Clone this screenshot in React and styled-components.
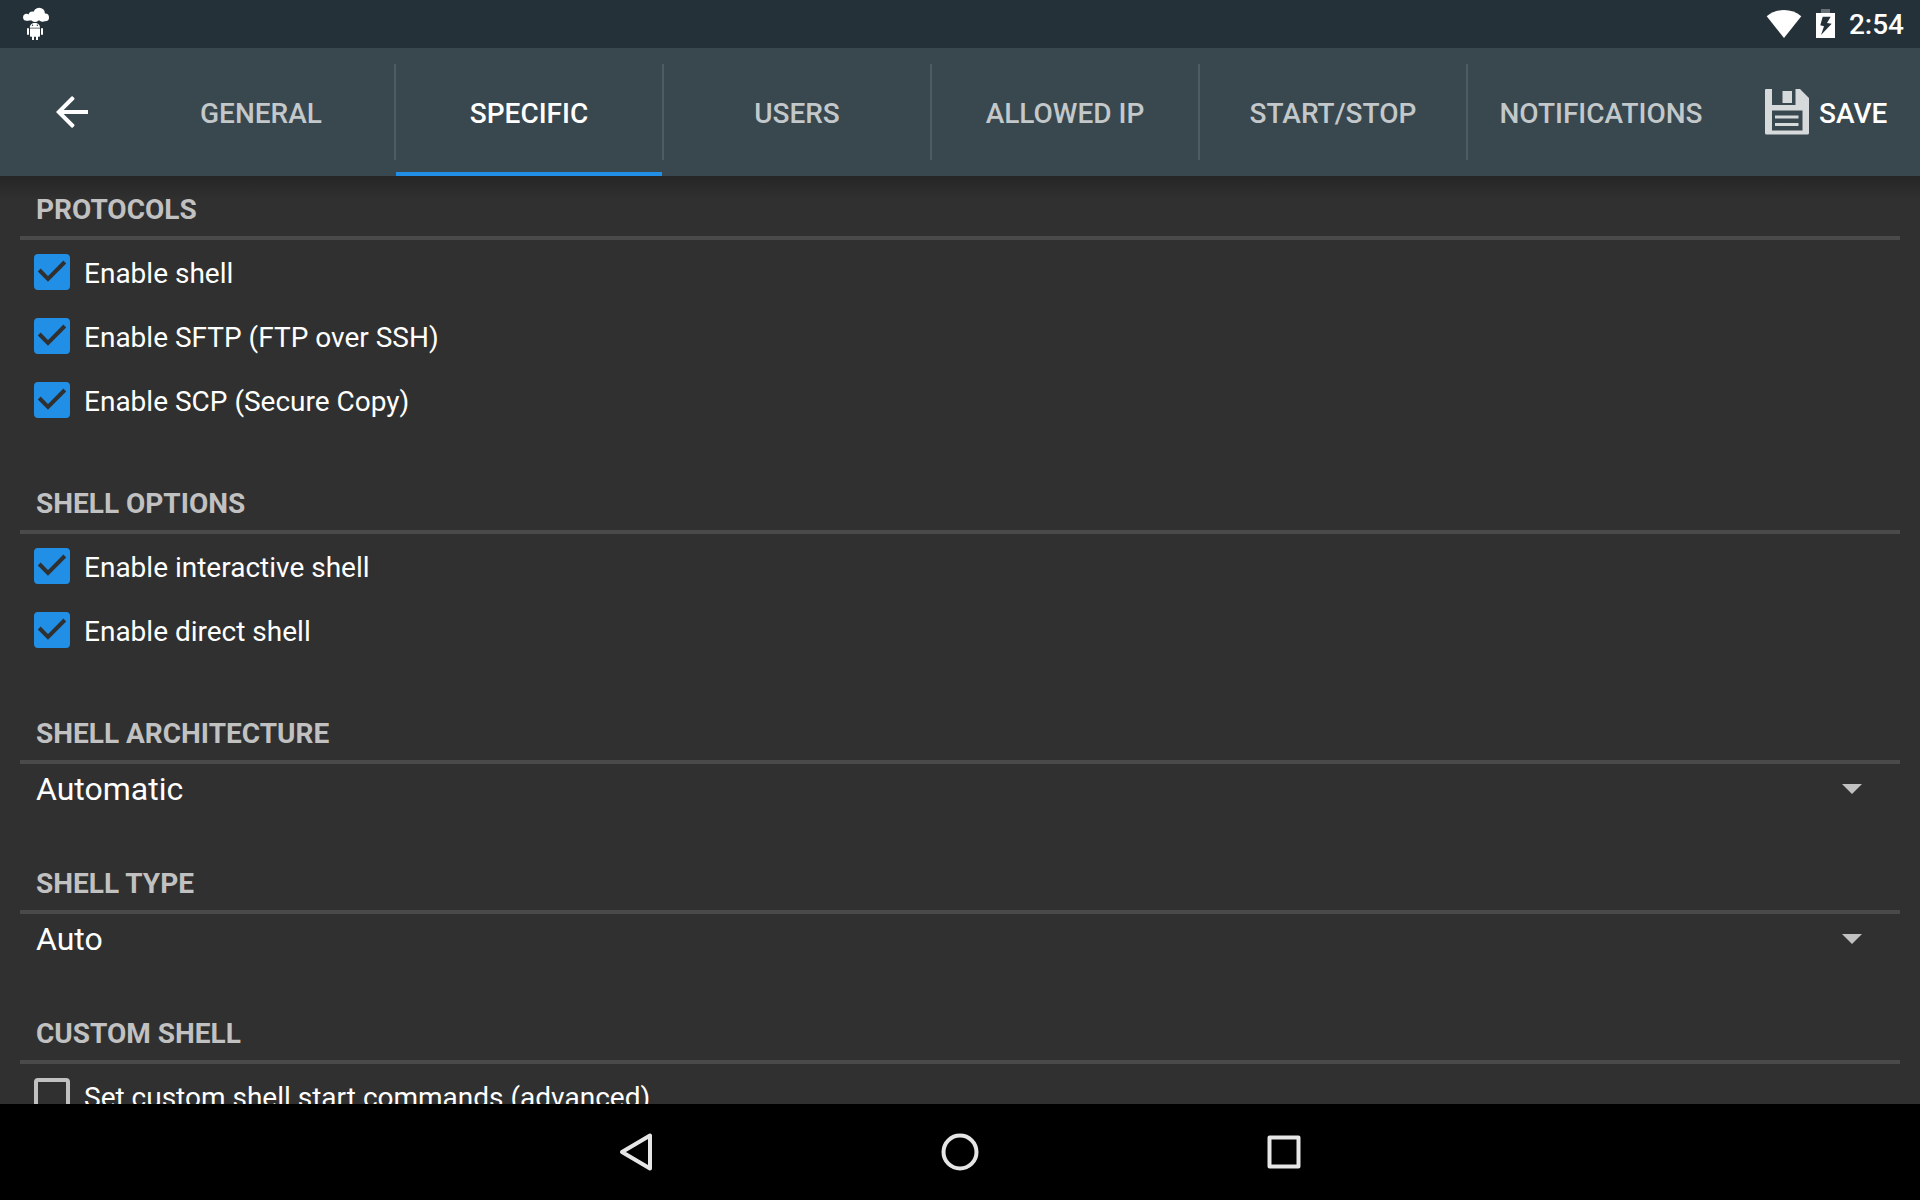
import React from 'react';
import styled, { createGlobalStyle } from 'styled-components';

const fontStyle = 'Roboto, "Noto Sans", sans-serif';
const background = '#303030';
const accent = '#218fe6';
const muted = '#c1c1c1';

const GlobalStyle = createGlobalStyle`
  * {
    box-sizing: border-box;
  }
  body {
    margin: 0;
    background: ${background};
    font-family: ${fontStyle};
    color: #fff;
  }
  button, select, input {
    margin: 0;
    padding: 0;
    border: 0;
    border-radius: 0;
    background: none;
    color: inherit;
    font-family: inherit;
    cursor: pointer;
  }
  svg {
    display: block;
    flex: none;
  }
`;

const Screen = styled.div`
  display: flex;
  flex-direction: column;
  height: 100vh;
`;

const StatusBar = styled.header`
  display: flex;
  justify-content: space-between;
  align-items: center;
  flex: none;
  height: 48px;
  padding: 0 16px 0 23px;
  background: #243138;
`;

const StatusIcons = styled.div`
  display: flex;
  align-items: center;
  gap: 14px;
`;

const Clock = styled.time`
  padding-top: 2px;
  font-size: 28px;
  font-weight: 500;
  line-height: 32px;
`;

const AppBar = styled.nav`
  display: flex;
  flex: none;
  height: 128px;
  background: #39474e;
`;

const BackButton = styled.button`
  display: flex;
  justify-content: center;
  align-items: center;
  width: 112px;
  margin-left: 16px;
`;

const Tabs = styled.div`
  display: flex;
  flex: 1;
`;

const Tab = styled.button`
  display: flex;
  flex: 1 1 0;
  flex-direction: column;
  justify-content: space-between;
  padding-top: 16px;
  font-size: 28px;
  font-weight: 500;
  color: ${({ $active }) => ($active ? '#fff' : '#c3c8ca')};
`;

const TabLabel = styled.span`
  display: flex;
  justify-content: center;
  align-items: center;
  width: 100%;
  height: 96px;
  padding-top: 2px;
  border-right: 2px solid ${({ $last }) => ($last ? 'transparent' : '#4f5c62')};
`;

const Indicator = styled.span`
  height: 4px;
  margin-right: 2px;
  align-self: stretch;
  background: ${({ $active }) => ($active ? accent : 'transparent')};
`;

const SaveButton = styled.button`
  display: flex;
  align-items: center;
  gap: 10px;
  width: 184px;
  padding-left: 29px;
  font-size: 28px;
  font-weight: 500;
`;

const SaveLabel = styled.span`
  padding-top: 2px;
`;

const Content = styled.main`
  flex: 1;
  min-height: 0;
  overflow-y: auto;
  scrollbar-width: none;
  padding: 0 20px;
  background: linear-gradient(#262626, ${background} 24px);
`;

const Section = styled.section`
  margin-bottom: 38px;
`;

const SectionTitle = styled.h2`
  height: 64px;
  margin: 0;
  padding: 18px 16px 0;
  border-bottom: 4px solid #4a4a4a;
  font-size: 28px;
  font-weight: 700;
  line-height: 32px;
  color: ${muted};
`;

const OptionRow = styled.label`
  display: flex;
  align-items: center;
  gap: 14px;
  height: 64px;
  padding-left: 14px;
  font-size: 28px;
  cursor: pointer;
`;

const OptionLabel = styled.span`
  padding-top: 2px;
`;

const TickBox = styled.span`
  display: grid;
  width: 36px;
  height: 36px;

  > * {
    grid-area: 1 / 1;
  }

  svg {
    pointer-events: none;
  }
`;

const TickInput = styled.input`
  appearance: none;
  width: 36px;
  height: 36px;
  border: 4px solid ${muted};
  border-radius: 4px;

  &:checked {
    border-color: ${accent};
    background: ${accent};
  }
`;

const Spinner = styled.div`
  display: grid;
  align-items: center;
  height: 48px;

  > * {
    grid-area: 1 / 1;
  }

  svg {
    justify-self: end;
    margin-right: 38px;
    pointer-events: none;
  }
`;

const SpinnerSelect = styled.select`
  appearance: none;
  width: 100%;
  height: 48px;
  padding: 2px 64px 0 16px;
  font-size: 32px;

  option {
    background: ${background};
  }
`;

const NavBar = styled.footer`
  display: flex;
  justify-content: center;
  flex: none;
  height: 96px;
  background: #000;
`;

const NavButton = styled.button`
  display: flex;
  justify-content: center;
  align-items: center;
  width: 324px;
`;

const CloudRobotIcon = () => (
  <svg width="26" height="34" viewBox="0 0 26 34" fill="#fff">
    <circle cx="3.6" cy="10.2" r="3.5" />
    <circle cx="9.4" cy="8.4" r="3.800" />
    <circle cx="16.2" cy="6.4" r="5.700" />
    <circle cx="22.2" cy="10.4" r="3.800" />
    <circle cx="12" cy="11.400" r="3.500" />
    <circle cx="19.500" cy="11.300" r="3.400" />
    <path d="M4 9h18v4.500H4z" />
    <path d="M6.800 20.800c0-3 2.100-4.800 5.100-4.800s5.100 1.800 5.100 4.800z" />
    <circle cx="9.500" cy="18.200" r="0.700" fill="#243138" />
    <circle cx="14.300" cy="18.200" r="0.700" fill="#243138" />
    <path d="M7 22h10v7q0 .8-.8.8H15V33h-2v-3.200h-2V33H9v-3.200H7.800q-.8 0-.8-.8z" />
    <path d="M7 21h10v1H7z" fill="#9aa2a6" />
    <rect x="4" y="21" width="2" height="7" rx="1" />
    <rect x="18" y="21" width="2" height="7" rx="1" />
  </svg>
);

const WifiIcon = () => (
  <svg width="36" height="28" viewBox="0 0 36 28" fill="#fff">
    <path d="M.7 6.200C5.500 2.200 11.500 0 18 0s12.500 2.200 17.300 6.200L18 28z" />
  </svg>
);

const BatteryIcon = () => (
  <svg width="19" height="30" viewBox="0 0 19 30">
    <path d="M5 0h9v4H5z" fill="#667075" />
    <path d="M0 4h19v25H0z" fill="#fff" />
    <path d="M6.700 7.700h8L11 14l4.700.7L5 26l3-8.700-3.700-1z" fill="#243138" />
  </svg>
);

const BackIcon = () => (
  <svg width="48" height="48" viewBox="0 0 24 24" fill="#fff">
    <path d="M20 11H7.830l5.290-5.290q.3-.35 0-.7l-.7-.7q-.35-.3-.7 0L4 12l7.720 7.690q.35.3.7 0l.7-.7q.3-.35 0-.7L7.830 13H20z" />
  </svg>
);

const SaveIcon = () => (
  <svg width="44" height="46" viewBox="0 0 44 46" fill="#d7dadb">
    <path
      fillRule="evenodd"
      d="M1 0h6v16h23.500V0H35l9 9v35q0 1.500-1.500 1.500h-41Q0 45.500 0 44V1q0-1 1-1zM7 21.500v20h30.500v-20z"
    />
    <path d="M17.500 2H27v12h-9.500z" />
    <path d="M10 26.500h23.500v3H10zM10 34h23.500v3H10z" />
  </svg>
);

const TickIcon = () => (
  <svg width="36" height="36" viewBox="0 0 36 36" fill="none" stroke={background} strokeWidth="4">
    <path d="M5.200 16l8.800 8.800L30.800 8" />
  </svg>
);

const ArrowIcon = () => (
  <svg width="20" height="12" viewBox="0 0 20 12" fill={muted}>
    <path d="M0 2h20L10 12z" />
  </svg>
);

const TriangleIcon = () => (
  <svg width="40" height="40" viewBox="0 0 40 40" fill="none" stroke="#e6e6e6" strokeWidth="4" strokeLinejoin="round">
    <path d="M34 3.500v33L6 20z" />
  </svg>
);

const CircleIcon = () => (
  <svg width="40" height="40" viewBox="0 0 40 40" fill="none" stroke="#e6e6e6" strokeWidth="4">
    <circle cx="20" cy="20" r="16.500" />
  </svg>
);

const SquareIcon = () => (
  <svg width="40" height="40" viewBox="0 0 40 40" fill="none" stroke="#e6e6e6" strokeWidth="4" strokeLinejoin="round">
    <path d="M5.500 5.500h29v29h-29z" />
  </svg>
);

const tabs = ['GENERAL', 'SPECIFIC', 'USERS', 'ALLOWED IP', 'START/STOP', 'NOTIFICATIONS'];

const sections = [
  {
    title: 'PROTOCOLS',
    options: [
      { label: 'Enable shell', checked: true },
      { label: 'Enable SFTP (FTP over SSH)', checked: true },
      { label: 'Enable SCP (Secure Copy)', checked: true },
    ],
  },
  {
    title: 'SHELL OPTIONS',
    options: [
      { label: 'Enable interactive shell', checked: true },
      { label: 'Enable direct shell', checked: true },
    ],
  },
  { title: 'SHELL ARCHITECTURE', value: 'Automatic' },
  { title: 'SHELL TYPE', value: 'Auto' },
  {
    title: 'CUSTOM SHELL',
    options: [{ label: 'Set custom shell start commands (advanced)', checked: false }],
  },
];

const Option = ({ label, checked, onChange }) => (
  <OptionRow>
    <TickBox>
      <TickInput type="checkbox" checked={checked} onChange={onChange} />
      {checked ? <TickIcon /> : null}
    </TickBox>
    <OptionLabel>{label}</OptionLabel>
  </OptionRow>
);

const Dropdown = ({ labelledBy, value }) => (
  <Spinner>
    <SpinnerSelect aria-labelledby={labelledBy} defaultValue={value}>
      <option>{value}</option>
    </SpinnerSelect>
    <ArrowIcon />
  </Spinner>
);

class App extends React.Component {
  constructor(props) {
    super(props);

    const checked = {};
    sections.forEach(({ options = [] }) => {
      options.forEach((option) => { checked[option.label] = option.checked; });
    });
    this.state = { active: 'SPECIFIC', checked };
    this.toggle = this.toggle.bind(this);
  }

  toggle(label) {
    this.setState(({ checked }) => ({ checked: { ...checked, [label]: !checked[label] } }));
  }

  render() {
    const { active, checked } = this.state;
    return (
      <Screen>
        <GlobalStyle />
        <StatusBar>
          <CloudRobotIcon />
          <StatusIcons>
            <WifiIcon />
            <BatteryIcon />
            <Clock>2:54</Clock>
          </StatusIcons>
        </StatusBar>
        <AppBar>
          <BackButton aria-label="Back"><BackIcon /></BackButton>
          <Tabs role="tablist">
            {tabs.map((tab, i) => (
              <Tab
                key={tab}
                role="tab"
                aria-selected={tab === active}
                $active={tab === active}
                onClick={() => this.setState({ active: tab })}
              >
                <TabLabel $last={i === tabs.length - 1}>{tab}</TabLabel>
                <Indicator $active={tab === active} />
              </Tab>
            ))}
          </Tabs>
          <SaveButton>
            <SaveIcon />
            <SaveLabel>SAVE</SaveLabel>
          </SaveButton>
        </AppBar>
        <Content>
          {sections.map(({ title, options, value }, i) => (
            <Section key={title}>
              <SectionTitle id={`section-${i}`}>{title}</SectionTitle>
              {options
                ? options.map(({ label }) => (
                  <Option
                    key={label}
                    label={label}
                    checked={checked[label]}
                    onChange={() => this.toggle(label)}
                  />
                ))
                : <Dropdown labelledBy={`section-${i}`} value={value} />}
            </Section>
          ))}
        </Content>
        <NavBar>
          <NavButton aria-label="Back"><TriangleIcon /></NavButton>
          <NavButton aria-label="Home"><CircleIcon /></NavButton>
          <NavButton aria-label="Recent apps"><SquareIcon /></NavButton>
        </NavBar>
      </Screen>
    );
  }
}

export default App;
